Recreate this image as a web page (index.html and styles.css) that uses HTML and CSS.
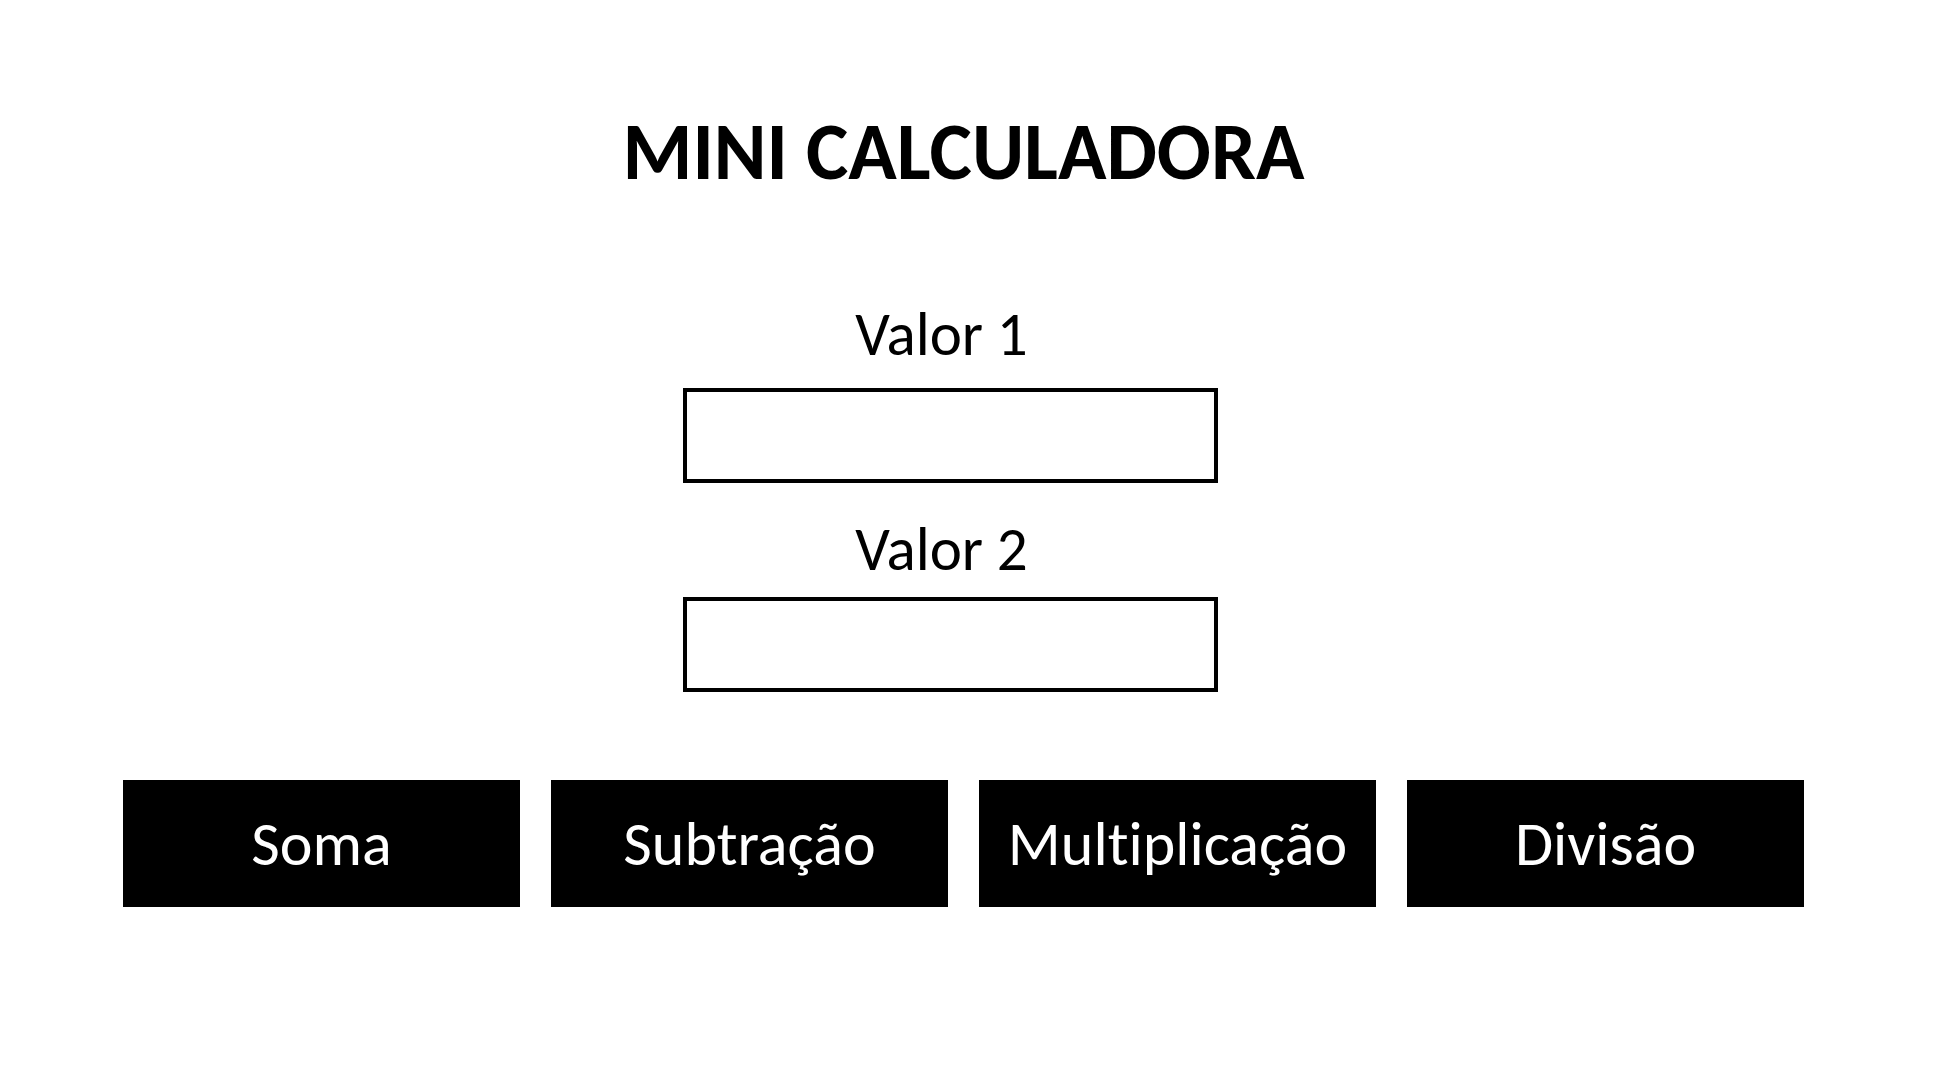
FILE: index.html
```html
<!DOCTYPE html>
<html lang="pt-br">
<head>
    <meta charset="UTF-8">
    <meta name="viewport" content="width=device-width, initial-scale=1.0">
    <title>Mini Calculadora</title>
    <link rel="stylesheet" href="styles.css">
</head>
<body>
    <div class="container">
        <h1 class="titulo">MINI CALCULADORA</h1>

        <div class="campos">
            <label for="valor1">Valor 1</label>
            <input type="number" id="valor1">
            <label for="valor2" class="segundo">Valor 2</label>
            <input type="number" id="valor2">
        </div>

        <div class="botoes">
            <button class="button">Soma</button>
            <button class="button">Subtração</button>
            <button class="button">Multiplicação</button>
            <button class="button">Divisão</button>
        </div>
    </div>
</body>
</html>
```

FILE: styles.css
```css
body {
    font-family: Carlito, "Open Sans", sans-serif;
    font-variant-ligatures: none;
    margin: 0;
    background-color: #fff;
    color: #000;
}
.container {
    width: 1681px;
    margin-left: 123px;
    padding-top: 112px;
}
.titulo {
    font-size: 80px;
    font-weight: bold;
    line-height: 1;
    text-align: center;
    margin: 0 0 112px 0;
}
.campos {
    display: flex;
    flex-direction: column;
    align-items: center;
    padding-right: 26px;
}
.campos label {
    font-size: 61px;
    line-height: 1;
    padding-right: 18px;
    margin-bottom: 23px;
}
.campos label.segundo {
    margin-top: 36px;
    margin-bottom: 17px;
}
.campos input {
    width: 535px;
    height: 95px;
    box-sizing: border-box;
    border: 4px solid #000;
    outline: none;
    font-size: 40px;
    font-family: inherit;
}
.botoes {
    display: flex;
    gap: 31px;
    margin-top: 88px;
}
.button {
    width: 397px;
    height: 127px;
    background-color: #000;
    color: #fff;
    border: none;
    font-family: inherit;
    font-size: 62px;
    font-variant-ligatures: none;
    line-height: 1;
    padding: 0;
}
```
